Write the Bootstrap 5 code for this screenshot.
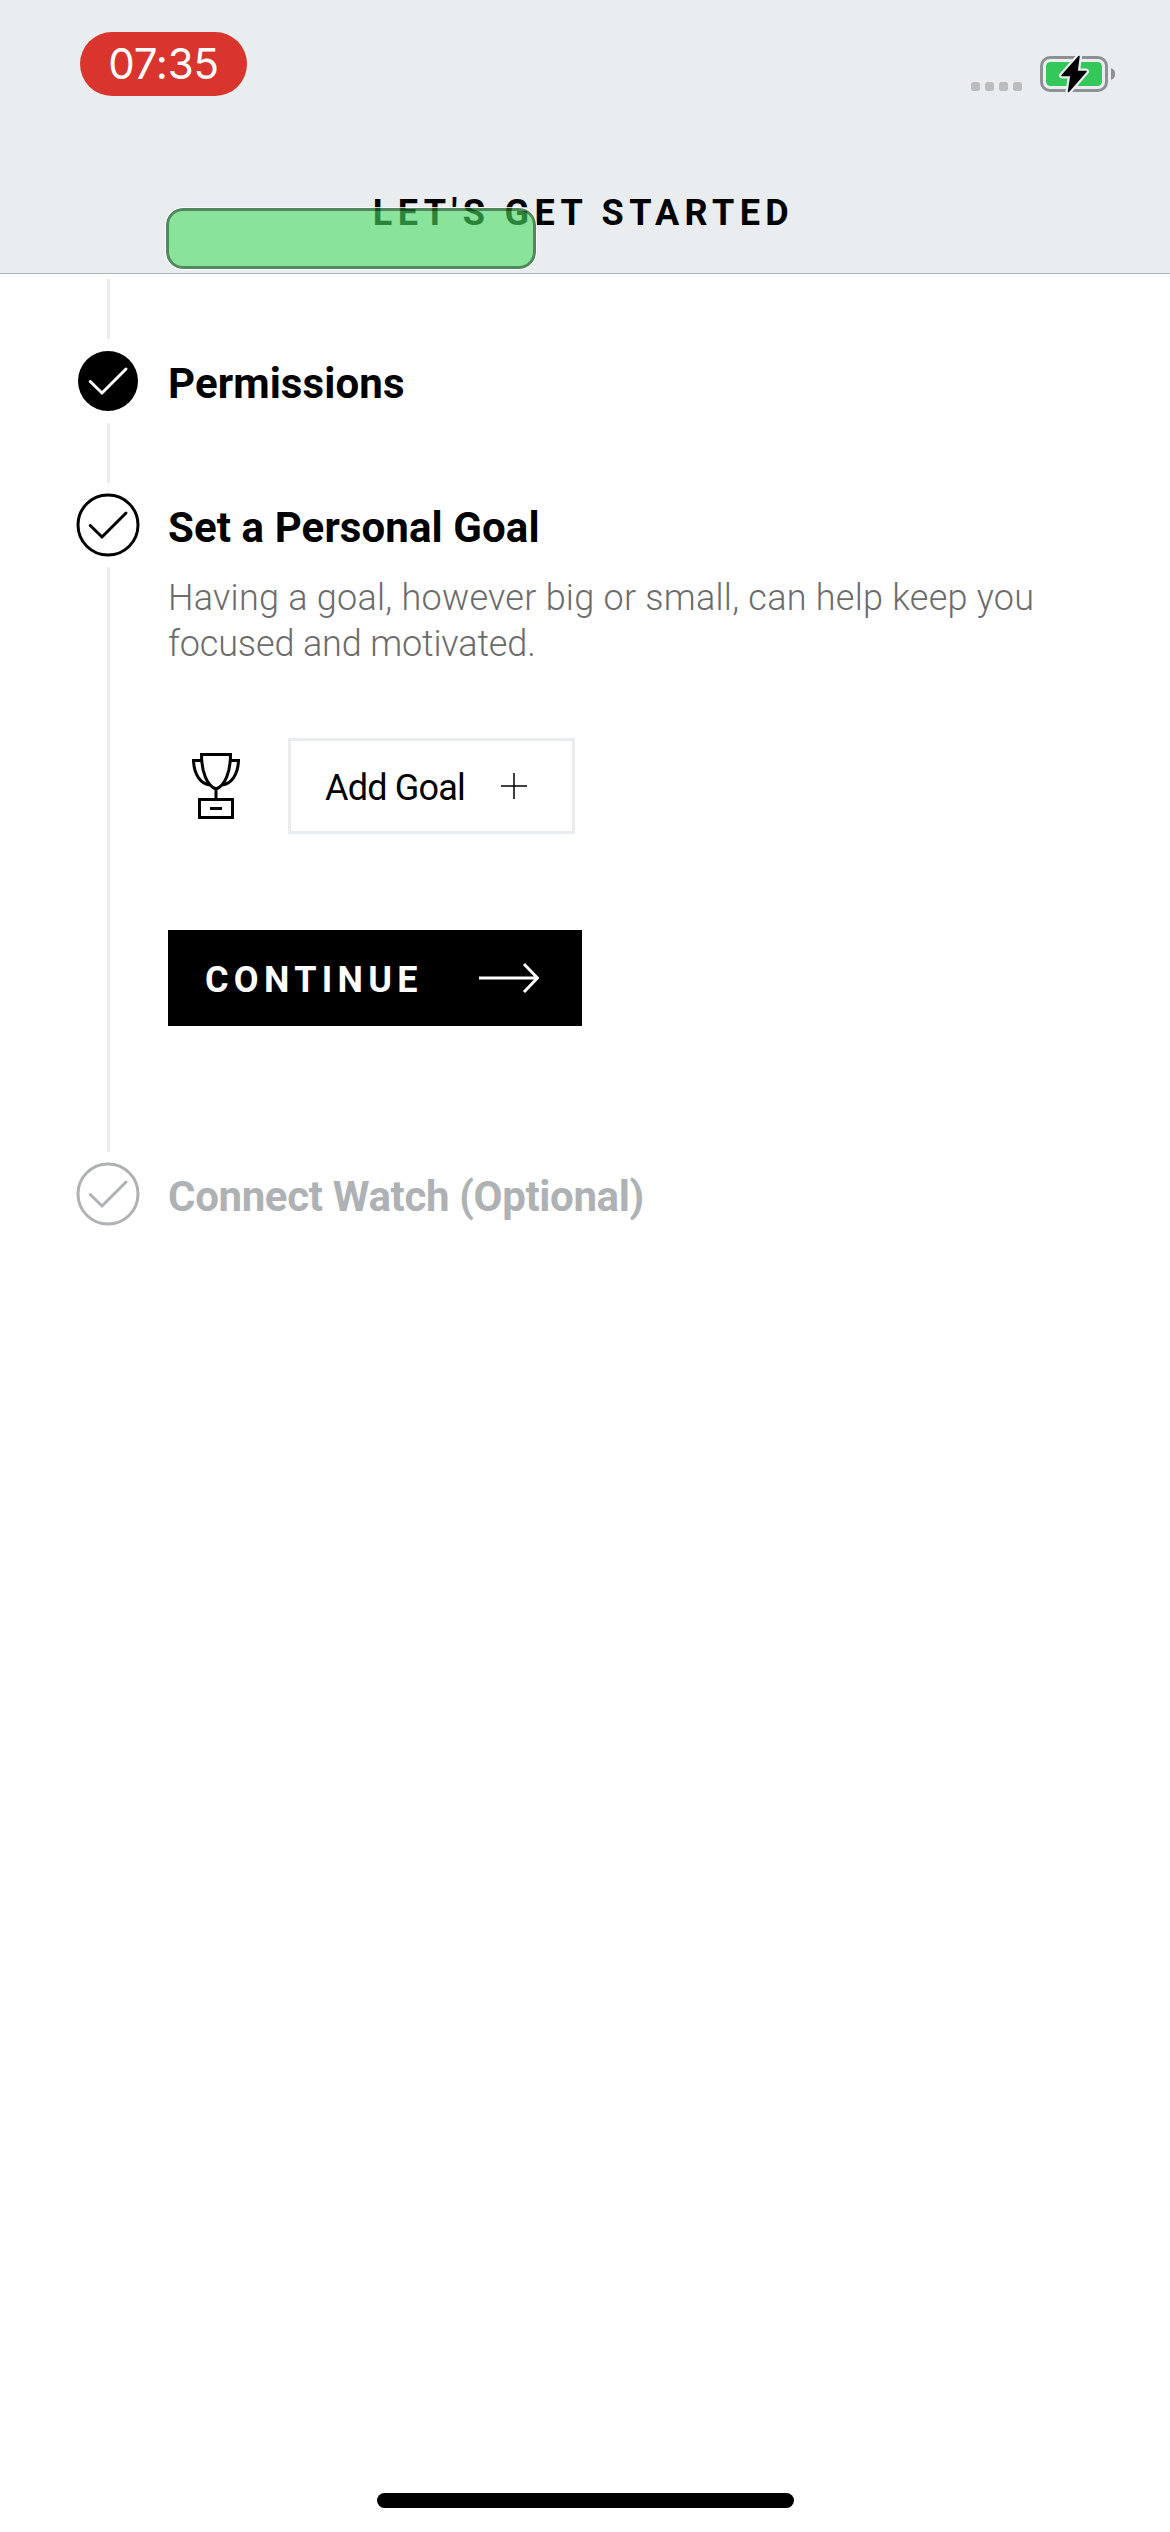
<!DOCTYPE html>
<html lang="en">
<head>
<meta charset="utf-8">
<meta name="viewport" content="width=device-width, initial-scale=1">
<title>Let's Get Started</title>
<link href="https://cdn.jsdelivr.net/npm/bootstrap@5.3.0/dist/css/bootstrap.min.css" rel="stylesheet">
<style>
  body { font-family: Roboto, "Liberation Sans", sans-serif; color: #000; height: 2532px; overflow: hidden; }
  .topbar { height: 274px; background: #e9edf0; border-bottom: 1px solid #b0b3b6; }
  .statusbar { height: 124px; padding: 32px 54px 0 80px; }
  .clock { width: 167px; height: 64px; border-radius: 32px; background: #d9342d; color: #fff; font: 400 42px/64px Inter, sans-serif; letter-spacing: -.2px; }
  .status-icons { margin-top: 22px; }
  .screen-title { font-size: 36px; line-height: 46px; font-weight: 700; letter-spacing: 5.4px; padding: 66px 0 0; margin-left: -3px; }
  .highlight { left: 166px; top: 208px; width: 370px; height: 61px; border-radius: 17px; background: rgba(73,220,98,.6); border: 3px solid rgba(0,0,0,.4); outline: 1px solid rgba(255,255,255,.8); }
  .steps { padding: 5px 76px 0; }
  .rail { width: 64px; }
  .rail svg { display: block; margin-bottom: 10px; }
  .track { width: 3px; height: 60px; background: #e9edf0; margin: 0 0 10px 31px; }
  .track-long { height: 585px; }
  .step-body { padding-left: 28px; }
  .step-name { font-size: 42px; line-height: 50px; font-weight: 700; margin: 10px 0 0; white-space: nowrap; letter-spacing: .1px; }
  .pending { color: #aeb2b5; letter-spacing: -.35px; }
  .about { font-size: 36px; line-height: 46px; color: #6c6c6c; margin: 22px 0 0; font-weight: 300; white-space: nowrap; letter-spacing: .25px; }
  .about-end { letter-spacing: -.15px; }
  .goal-row { margin-top: 71px; padding-left: 24px; }
  .btn-goal { width: 287px; height: 96px; border: 3px solid #e9edf0; border-radius: 0; background: #fff; font-size: 36px; padding: 0 45px 0 34px; color: #000; margin-left: 48px; letter-spacing: -.8px; }
  .btn-next { width: 414px; height: 96px; border-radius: 0; background: #000; color: #fff; font-size: 36px; font-weight: 700; margin-top: 96px; padding: 0 42px 0 36px; letter-spacing: 5.3px; }
  .btn-goal span, .btn-next span { padding-top: 3px; }
  .home-bar { width: 417px; height: 15px; border-radius: 8px; background: #000; bottom: 24px; left: 377px; }
</style>
<script src="https://cdn.jsdelivr.net/npm/bootstrap@5.3.0/dist/js/bootstrap.bundle.min.js"></script>
</head>
<body class="position-relative bg-white">
<header class="topbar">
  <div class="statusbar d-flex justify-content-between align-items-start">
    <div class="clock text-center">07:35</div>
    <svg class="status-icons" width="146" height="40" viewBox="970 54 146 40">
      <g fill="#babcbe"><rect x="971" y="82" width="9" height="9" rx="2.5"/><rect x="985" y="82" width="9" height="9" rx="2.5"/><rect x="999" y="82" width="9" height="9" rx="2.5"/><rect x="1013" y="82" width="9" height="9" rx="2.5"/></g>
      <rect x="1041.5" y="57.5" width="65" height="33" rx="8.5" fill="none" stroke="#8e9093" stroke-width="3"/>
      <rect x="1046" y="62" width="56" height="24" rx="4.5" fill="#34c759"/>
      <path d="M1111 68c5.500 1.500 5.500 10.500 0 12z" fill="#8e9093"/>
      <path d="M1079 56.500L1062 75.500H1071L1068.500 91.500L1086 71.500H1077z" fill="#000" stroke="#e9edf0" stroke-width="6" stroke-linejoin="round" paint-order="stroke"/>
      <path d="M1079 56.500L1062 75.500H1071L1068.500 91.500L1086 71.500H1077z" stroke="#000" stroke-width="1.500" stroke-linejoin="round"/>
    </svg>
  </div>
  <h1 class="screen-title text-center mb-0">LET'S GET STARTED</h1>
</header>
<div class="highlight position-absolute"></div>
<main class="steps">
  <div class="rail"><div class="track"></div></div>
  <section class="d-flex">
    <div class="rail">
      <svg width="64" height="64" viewBox="-32 -32 64 64"><circle r="30"/><path d="M-17.700 .5L-6 12L18-12" fill="none" stroke="#fff" stroke-width="3" stroke-linecap="round"/></svg>
      <div class="track"></div>
    </div>
    <div class="step-body"><h2 class="step-name">Permissions</h2></div>
  </section>
  <section class="d-flex">
    <div class="rail">
      <svg width="64" height="64" viewBox="-32 -32 64 64" fill="none" stroke="#000" stroke-width="3"><circle r="30"/><path d="M-17.700 .5L-6 12L18-12" stroke-linecap="round"/></svg>
      <div class="track track-long"></div>
    </div>
    <div class="step-body">
      <h2 class="step-name">Set a Personal Goal</h2>
      <p class="about">Having a goal, however big or small, can help keep you<br><span class="about-end">focused and motivated.</span></p>
      <div class="goal-row d-flex align-items-center">
        <svg width="48" height="66" viewBox="192 753 48 66" fill="none" stroke="#000" stroke-width="3"><path d="M201.500 754.500H230.500C230.500 772 225 786 216 789C207 786 201.500 772 201.500 754.500zM202 760.500H193.500C194 775 201 784 210 785M230 760.500H238.500C238 775 231 784 222 785M216 789V799M199.500 799.500H232.500V817.500H199.500zM210 808.500H222"/></svg>
        <button type="button" class="btn btn-goal d-flex justify-content-between align-items-center"><span>Add Goal</span><svg width="26" height="26" viewBox="0 0 26 26" stroke="#000" stroke-width="1.500"><path d="M0 13H26M13 0V26"/></svg></button>
      </div>
      <button type="button" class="btn btn-next d-flex justify-content-between align-items-center"><span>CONTINUE</span><svg width="60" height="32" viewBox="0 0 60 32" fill="none" stroke="#fff" stroke-width="3"><path d="M0 16H58M45 2L58.500 16L45 30"/></svg></button>
    </div>
  </section>
  <section class="d-flex">
    <div class="rail">
      <svg width="64" height="64" viewBox="-32 -32 64 64" fill="none" stroke="#aeb2b5" stroke-width="3"><circle r="30"/><path d="M-17.700 .5L-6 12L18-12" stroke-linecap="round"/></svg>
    </div>
    <div class="step-body"><h2 class="step-name pending">Connect Watch (Optional)</h2></div>
  </section>
</main>
<div class="home-bar position-absolute"></div>
</body>
</html>
